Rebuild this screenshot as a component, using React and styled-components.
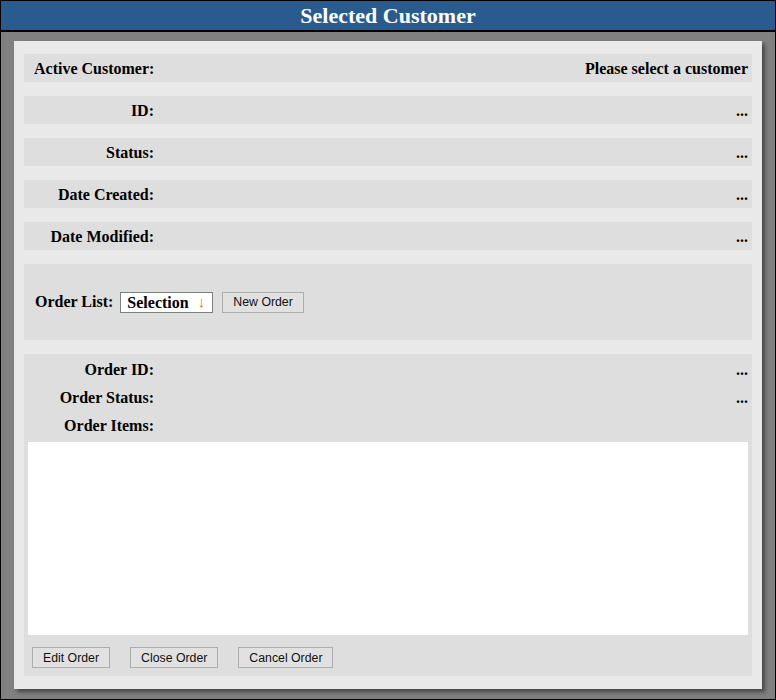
import React from 'react';
import styled, { createGlobalStyle } from 'styled-components';

const GlobalStyle = createGlobalStyle`
  html, body {
    margin: 0;
    padding: 0;
    background: #fff;
  }
  body {
    font-family: "Liberation Serif", "Times New Roman", serif;
  }
  * {
    box-sizing: border-box;
  }
`;

const Frame = styled.div`
  width: 776px;
  height: 700px;
  border: 1px solid #000;
  background: #808080;
  display: flex;
  flex-direction: column;
`;

const Header = styled.h1`
  margin: 0;
  height: 31px;
  line-height: 30px;
  background: #295b8f;
  border-bottom: 2px solid #000;
  color: #fff;
  font-size: 22px;
  font-weight: bold;
  text-align: center;
`;

const Panel = styled.div`
  flex: 1;
  margin: 9px 13px 10px;
  padding: 13px 10px;
  background: #e9e9e9;
  box-shadow: 3px 3px 4px rgba(0, 0, 0, 0.45);
  display: flex;
  flex-direction: column;
  gap: 14px;
`;

const Row = styled.div`
  height: 28px;
  display: flex;
  align-items: center;
  padding: ${(p) => (p.inset ? '2px 0 0 6px' : '2px 4px 0 10px')};
  background: ${(p) => (p.inset ? 'transparent' : '#dedede')};
  font-size: 16px;
  font-weight: bold;
  color: #000;
`;

const Label = styled.span`
  width: 120px;
  text-align: right;
  white-space: nowrap;
`;

const Value = styled.span`
  flex: 1;
  text-align: right;
  white-space: nowrap;
`;

const OrderListBar = styled.div`
  height: 76px;
  display: flex;
  align-items: center;
  padding-left: 11px;
  background: #dedede;
  font-size: 16px;
  font-weight: bold;
`;

const Select = styled.div`
  width: 93px;
  height: 21px;
  margin-left: 7px;
  padding: 1px 7px 0 6px;
  display: flex;
  align-items: center;
  justify-content: space-between;
  background: #fff;
  border: 1px solid #7a807a;
  font-size: 16px;
  font-weight: bold;
`;

const Arrow = styled.span`
  color: #e07800;
  font-weight: normal;
  font-size: 15px;
`;

const Button = styled.button`
  height: 21px;
  margin-left: ${(p) => p.offset || 0}px;
  padding: 0 10px;
  background: #e1e1e1;
  border: 1px solid #adadad;
  border-radius: 0;
  color: #111;
  font-family: "Liberation Sans", Arial, sans-serif;
  font-size: 12.3px;
  cursor: pointer;
`;

const OrderPanel = styled.div`
  flex: 1;
  display: flex;
  flex-direction: column;
  padding: 1px 4px 8px;
  background: #dedede;
`;

const ItemsBox = styled.div`
  height: 193px;
  margin-top: 3px;
  background: #fff;
`;

const ButtonBar = styled.div`
  display: flex;
  gap: 20px;
  margin-top: 12px;
  padding-left: 4px;
`;

const fields = [
  { label: 'Active Customer:', value: 'Please select a customer' },
  { label: 'ID:', value: '...' },
  { label: 'Status:', value: '...' },
  { label: 'Date Created:', value: '...' },
  { label: 'Date Modified:', value: '...' },
];

const orderFields = [
  { label: 'Order ID:', value: '...' },
  { label: 'Order Status:', value: '...' },
  { label: 'Order Items:', value: '' },
];

const App = () => (
  <>
    <GlobalStyle />
    <Frame>
      <Header>Selected Customer</Header>
      <Panel>
        {fields.map((f) => (
          <Row key={f.label}>
            <Label>{f.label}</Label>
            <Value>{f.value}</Value>
          </Row>
        ))}
        <OrderListBar>
          <span>Order List:</span>
          <Select>
            <span>Selection</span>
            <Arrow>↓</Arrow>
          </Select>
          <Button offset={9}>New Order</Button>
        </OrderListBar>
        <OrderPanel>
          {orderFields.map((f) => (
            <Row inset key={f.label}>
              <Label>{f.label}</Label>
              <Value>{f.value}</Value>
            </Row>
          ))}
          <ItemsBox />
          <ButtonBar>
            <Button>Edit Order</Button>
            <Button>Close Order</Button>
            <Button>Cancel Order</Button>
          </ButtonBar>
        </OrderPanel>
      </Panel>
    </Frame>
  </>
);

export default App;
